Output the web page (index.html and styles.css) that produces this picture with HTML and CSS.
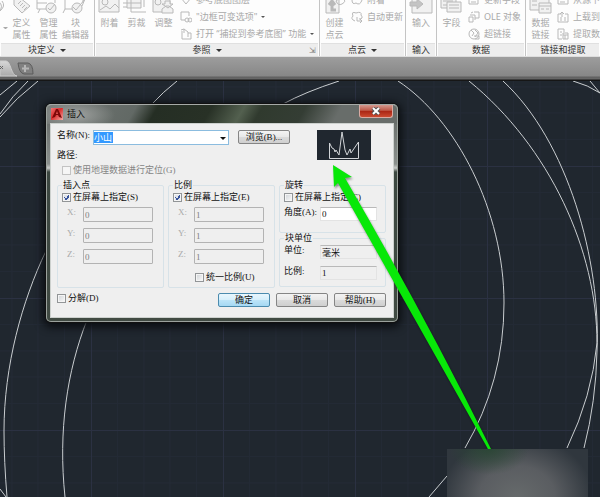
FILE: index.html
```html
<!DOCTYPE html>
<html lang="zh-CN">
<head>
<meta charset="utf-8">
<title>插入</title>
<link rel="stylesheet" href="styles.css">
</head>
<body>
<svg class="defs" aria-hidden="true">
  <defs>
    <linearGradient id="red" x1="0" y1="0" x2="1" y2="1"><stop offset="0" stop-color="#ef7777"/><stop offset=".45" stop-color="#d92c2c"/><stop offset="1" stop-color="#f4aaa6"/></linearGradient>
  </defs>
</svg>
<header class="ribbon">
  <section class="panel">
    <div class="tools">
      <span class="edge"><svg class="big" viewBox="0 0 10 14"><path d="M-4 0Q3 3 1 9L-4 12M2 1Q6 6 0 11"/></svg><i class="caret"></i></span>
      <button class="tool"><svg class="big" viewBox="0 0 26 14"><path class="fill" d="M6 2V-3L11-3 22 6 14 13 6 5Z"/><path d="M10 4L13 1M12 6L15 3M14 8L17 5M16 10L19 7"/></svg>定义<br>属性</button>
      <button class="tool"><svg class="big" viewBox="0 0 26 14"><path d="M2-2V9H11M2 3H12M20-1V3"/><circle class="fill" cx="16" cy="8" r="5"/><path d="M13 8L15 10 20 4M3 13L5 9"/></svg>管理<br>属性</button>
      <button class="tool"><svg class="big" viewBox="0 0 26 14"><path d="M3-2V9H12M3 9L1 13M14-1H21V3"/><circle class="fill" cx="15" cy="8" r="5"/><path d="M11 7L14 10 23-1 20 6"/></svg>块<br>编辑器</button>
    </div>
    <h2>块定义 <i class="caret"></i></h2>
  </section>
  <section class="panel">
    <div class="tools">
      <button class="tool first"><svg class="big" viewBox="0 0 26 14"><path class="fill" d="M3-2H23V12H3Z"/><circle cx="9" cy="2" r="3"/><path d="M4 10L10 6 14 9 19 4 23 8"/></svg>附着</button>
      <button class="tool"><svg class="big" viewBox="0 0 26 14"><path class="fill" d="M4-2H18V8H4Z"/><path d="M0 3H18M8-2V12H23M21-2V7M0 7H4"/></svg>剪裁</button>
      <button class="tool"><svg class="big" viewBox="0 0 26 14"><path class="fill" d="M3-2H20V12H3Z"/><circle cx="8" cy="2" r="3"/><path class="fill" d="M12 13V9L16 6H19L23 9V13ZM15 1H20V4H23L18 8 12 4H15Z"/></svg>调整</button>
      <ul class="list">
        <li><button><svg viewBox="0 0 12 12"><path d="M1 4L6 10 11 4"/></svg>参考底图图层</button></li>
        <li><button><svg viewBox="0 0 12 12"><path d="M5 9H1V1H9V5"/><circle cx="7" cy="9" r="2"/><circle cx="10" cy="9" r="2"/></svg>"边框可变选项"<i class="caret"></i></button></li>
        <li><button><svg viewBox="0 0 12 12"><path d="M2 3V11H11V5H8M4 5V1L8 4V9M1 2L4 1"/></svg>打开 “捕捉到参考底图” 功能<i class="caret"></i></button></li>
      </ul>
    </div>
    <h2>参照 <i class="caret"></i><span class="launcher">⇲</span></h2>
  </section>
  <section class="panel">
    <div class="tools">
      <button class="tool first"><svg class="big" viewBox="0 0 26 14"><path class="fill" d="M5-2H18V13H5Z"/><path class="arrow" d="M15 10H11V3M8 5L11 1 14 5"/><path d="M15 1Q18-3 22-1T21 4Q17 6 15 1"/></svg>创建<br>点云</button>
      <ul class="list">
        <li><button><svg viewBox="0 0 12 12"><path d="M1 6Q1 11 5 9 9 12 11 6"/></svg>附着</button></li>
        <li><button><svg viewBox="0 0 12 12"><path d="M4 10Q-1 8 2 5 0 0 5 2 11 0 10 4 13 8 8 8M6 6V10H11M9 8L11 10 9 12"/></svg>自动更新</button></li>
      </ul>
    </div>
    <h2>点云 <i class="caret"></i></h2>
  </section>
  <section class="panel">
    <div class="tools middle">
      <button class="tool"><svg class="big" viewBox="0 0 26 14"><path class="fill" d="M4-2H24V13H4Z"/><path class="fill dark" d="M2 2H9V-1L15 4 9 9V6H2Z"/></svg>输入</button>
    </div>
    <h2>输入</h2>
  </section>
  <section class="panel">
    <div class="tools">
      <button class="tool first"><svg class="big" viewBox="0 0 26 14"><path class="fill" d="M3-2H18V8H3Z"/><path d="M5 1H15M5 5H15"/><path class="fill" d="M9 2H23V12H9Z"/><path d="M11 5H21M11 8H21"/></svg>字段</button>
      <ul class="list">
        <li><button><svg viewBox="0 0 12 12"><path d="M1 4V10H10V4M3 8H8"/></svg>更新字段</button></li>
        <li><button><svg viewBox="0 0 12 12"><path d="M6 1H11V7H7M2 4H7V9M1 6V11H5V6ZM3 2L5 1"/></svg>OLE 对象</button></li>
        <li><button><svg viewBox="0 0 12 12"><circle cx="6" cy="6" r="5"/><path d="M3 2L6 5 4 8M7 2L10 5 7 9M6 8H11V11H7"/></svg>超链接</button></li>
      </ul>
    </div>
    <h2>数据</h2>
  </section>
  <section class="panel">
    <div class="tools">
      <button class="tool first"><svg class="big" viewBox="0 0 26 14"><path class="fill" d="M3-2H22V10H3Z"/><path d="M5 1H10M5 5H10"/><path class="fill" d="M12 3H24V13H12Z"/><path d="M12 6H24M14 9H17M19 9H22M15-1H19"/></svg>数据<br>链接</button>
      <ul class="list">
        <li><button><svg viewBox="0 0 12 12"><path d="M1 3V10H11V6M3 8H8"/></svg>从源下载</button></li>
        <li><button><svg viewBox="0 0 12 12"><path d="M1 3V11H11V3H8M4 3H1M5 6V1M3 3L5 1 7 3M3 7H5M3 9H5M7 7H9M7 9H9"/></svg>上载到源</button></li>
        <li><button><svg viewBox="0 0 12 12"><path d="M5 11H1V1H7V4M3 4H5M3 7H5M6 5H11V11H6ZM6 7H11M8 7V11"/></svg>提取数据</button></li>
      </ul>
    </div>
    <h2>链接和提取</h2>
  </section>
</header>
<nav class="tabs">
  <svg viewBox="0 0 40 17" aria-hidden="true">
    <defs><linearGradient id="tab" x1="0" y1="0" x2="0" y2="1"><stop offset="0" stop-color="#d8d8d8"/><stop offset="1" stop-color="#aaa"/></linearGradient></defs>
    <path d="M0 1H6C11 1 11 16 17 16H0Z" fill="url(#tab)" stroke="#ccc"/>
    <path d="M0 6L3 9M3 6L0 9" stroke="#666"/>
    <path d="M18 3H28Q33 4 33 14H24Q19 13 18 3Z" fill="#808080" stroke="#5c5c5c"/>
    <path d="M25 5V12M22 8.500H29" stroke="#b5b5b5" stroke-width="2"/>
  </svg>
</nav>
<main class="drawing">
  <svg class="model" viewBox="0 0 600 416" preserveAspectRatio="xMinYMin slice" aria-hidden="true">
    <defs>
      <pattern id="grid" x="91" y="85" width="132" height="132" patternUnits="userSpaceOnUse">
        <path d="M26.500 0V132M53 0V132M79 0V132M105.500 0V132M0 26.500H132M0 53H132M0 79H132M0 105.500H132" stroke="#232a35"/>
        <path d="M.5 0V132M0 .5H132" stroke="#2b3142"/>
      </pattern>
    </defs>
    <rect width="600" height="416" fill="url(#grid)"/>
    <g class="curves">
      <path d="M17 0L0 14M28 0Q12 15 0 33M38 0Q16 17 0 36"/>
      <path d="M177 0Q163 11 152 23M339 0Q305 11 283 23"/>
      <path d="M46 170C22 220 4 285 4 350Q4 380 7 416M0 408L6 416"/>
      <path d="M87 239C67 290 58 350 65 416"/>
      <path d="M398 0C456 38 504 130 504 222Q504 300 465 367M447 395L429 416"/>
      <path d="M469 0C550 66 597 170 597 262Q592 315 567 367"/>
      <path d="M503 0C568 60 601 180 597 270Q596 320 584 367"/>
      <path d="M573 0Q588 4 600 12M590 0L600 12"/>
    </g>
  </svg>

  <form class="dialog">
    <div class="titlebar">
      <svg class="logo" viewBox="0 0 12 12" aria-hidden="true"><path d="M0 0H12V12H0Z" fill="url(#red)"/><path d="M1 10L5 1H7L11 10 8 9 7 7H5L4 9Z" fill="#7d0808"/><path d="M6 3L7 6H5Z" fill="#e35454"/></svg>
      <h1>插入</h1>
      <button type="button" class="close" aria-label="关闭"><svg viewBox="0 0 10 8"><path d="M2 1L8 7M8 1L2 7" stroke="#555" stroke-width="4"/><path d="M2 1L8 7M8 1L2 7" stroke="#fff" stroke-width="2"/></svg></button>
    </div>
    <div class="client">
      <div class="top">
        <div class="source">
          <div class="namerow">
            <label for="name">名称(N):</label>
            <span class="combo"><input id="name" value="小山"><button type="button" aria-label="展开"><i class="caret"></i></button></span>
            <button type="button" class="btn">浏览(B)...</button>
          </div>
          <p>路径:</p>
          <label class="check geo"><input type="checkbox" disabled>使用地理数据进行定位(G)</label>
        </div>
        <svg class="preview" viewBox="0 0 54 30" aria-hidden="true"><path d="M12.500 28.500V13L15 18 17 19 18 22 19 20 22 25 25 2 28 20 30 25 33 19 34 23 41.500 12V28.500Z"/></svg>
      </div>
      <div class="groups">
        <fieldset>
          <legend>插入点</legend>
          <label class="check"><input type="checkbox" checked>在屏幕上指定(S)</label>
          <div class="coords">
            <label for="px">X:</label><input id="px" value="0" disabled>
            <label for="py">Y:</label><input id="py" value="0" disabled>
            <label for="pz">Z:</label><input id="pz" value="0" disabled>
          </div>
        </fieldset>
        <fieldset>
          <legend>比例</legend>
          <label class="check"><input type="checkbox" checked>在屏幕上指定(E)</label>
          <div class="coords">
            <label for="sx">X:</label><input id="sx" value="1" disabled>
            <label for="sy">Y:</label><input id="sy" value="1" disabled>
            <label for="sz">Z:</label><input id="sz" value="1" disabled>
          </div>
          <label class="check uniform"><input type="checkbox">统一比例(U)</label>
        </fieldset>
        <div class="stack">
          <fieldset>
            <legend>旋转</legend>
            <label class="check"><input type="checkbox">在屏幕上指定(C)</label>
            <div class="values angle"><label for="angle">角度(A):</label><input id="angle" value="0"></div>
          </fieldset>
          <fieldset>
            <legend>块单位</legend>
            <div class="values">
              <label for="unit">单位:</label><input id="unit" value="毫米" readonly>
              <label for="factor">比例:</label><input id="factor" value="1" readonly>
            </div>
          </fieldset>
        </div>
      </div>
      <div class="actions">
        <label class="check"><input type="checkbox">分解(D)</label>
        <button type="button" class="btn primary">确定</button>
        <button type="button" class="btn">取消</button>
        <button type="button" class="btn">帮助(H)</button>
      </div>
    </div>
  </form>

  <svg class="pointer" viewBox="0 0 160 286" aria-hidden="true"><path d="M1 1L20 13 13 14Q91 148 159 285L156 285 6 19 2 23Z"/></svg>
  <div class="smudge"></div>
</main>
</body>
</html>
```

FILE: styles.css
```css
* { box-sizing: border-box; }
html, body { height: 100%; }
body {
  margin: 0;
  display: flex;
  flex-direction: column;
  overflow: hidden;
  font: 9px/10px "Liberation Serif", "Noto Sans CJK SC", serif;
  color: #111;
}
button, input { font: inherit; color: inherit; margin: 0; padding: 0; }
h1, h2, p, ul { margin: 0; padding: 0; font: inherit; list-style: none; }
svg { fill: none; flex: none; }
.defs { width: 0; height: 0; position: absolute; }
.caret {
  display: inline-block;
  border: 3px solid transparent;
  border-top-color: currentColor;
  border-bottom: 0;
  vertical-align: middle;
}

/* ribbon */
.ribbon {
  flex: none;
  display: grid;
  grid-template-columns: 95px 225px 86px 31px 89px 1fr;
  font-family: "Noto Sans", "Noto Sans CJK SC", sans-serif;
  background: #fdfdfd;
  border-bottom: 1px solid #ddd;
}
.panel { min-width: 0; border-right: 1px solid #c4c4c4; overflow: hidden; }
.panel:last-child { border-right: 0; }
.tools {
  display: flex;
  height: 43px;
  overflow: hidden;
  color: #a9a9a9;
  align-items: flex-start;
}
.tools.middle { justify-content: center; }
.panel h2 {
  display: flex;
  justify-content: center;
  align-items: center;
  gap: 5px;
  height: 13px;
  margin: 0 1px;
  background: #ededed;
  border-top: 1px solid #e0e0e0;
  color: #333;
  position: relative;
}
.launcher { position: absolute; right: 2px; color: #777; font-size: 8px; }
.edge { width: 8px; flex: none; }
.edge .big { width: 10px; }
.edge .caret { border-width: 2px; border-bottom: 0; margin: 13px 0 0 3px; display: block; }
.tool {
  flex: none;
  width: 27px;
  border: 0;
  background: none;
  line-height: 12px;
  text-align: center;
  white-space: nowrap;
}
.tool.first { margin-left: 1px; }
.big { display: block; width: 26px; height: 14px; margin-bottom: 3px; }
.tools svg { stroke: #b9b9b9; }
.tools .fill { fill: #f1f1f1; }
.tools .dark { fill: #c4c4c4; }
.tools .arrow { stroke-width: 3; }
.list { margin: -9px 0 0 3px; }
.list button {
  display: flex;
  align-items: center;
  gap: 4px;
  height: 17px;
  border: 0;
  background: none;
  white-space: nowrap;
}
.list svg { width: 12px; height: 12px; }
.list .caret { border-width: 2px; border-bottom: 0; color: #555; }

/* document tabs */
.tabs {
  flex: none;
  height: 24px;
  padding-top: 3px;
  background: linear-gradient(#9d9d9d, #878787 19px, #606060 20px, #686868 22px, #161616 23px);
}
.tabs svg { display: block; width: 40px; height: 17px; }

/* drawing area */
.drawing {
  flex: 1;
  position: relative;
  overflow: hidden;
  background: #20272f;
}
.model { position: absolute; inset: 0; width: 100%; height: 100%; }
.curves { stroke: #c9cdd0; }
.pointer {
  position: absolute;
  left: 332px;
  top: 83px;
  width: 160px;
  height: 286px;
  fill: #08e808;
  filter: drop-shadow(1px 2px 1px rgba(0, 0, 0, .4));
}
.smudge {
  position: absolute;
  left: 447px;
  top: 368px;
  width: 141px;
  height: 60px;
  background:
    radial-gradient(ellipse 40px 26px at 42px 0, rgba(40, 72, 50, .8), transparent 100%),
    radial-gradient(ellipse 76px 62px at 70px 48px, #666a6b 0, #5a5d61 50%, #30373e 100%);
}

/* insert dialog */
.dialog {
  position: absolute;
  left: 46px;
  top: 23px;
  width: 352px;
  padding: 0 5px 5px;
  border-radius: 5px;
  background: linear-gradient(#5d625f, #8b908d 60px, #c8cac8 64px, #3c4740 68px, #414b43);
  box-shadow: inset 0 0 0 1px #9ba29d, 0 0 0 1px #111, 0 2px 9px 3px #0a0d10;
}
.titlebar {
  display: flex;
  align-items: center;
  gap: 4px;
  height: 20px;
  margin: 0 -4px;
  padding: 0 0 2px 4px;
  border-radius: 5px 5px 0 0;
  background:
    radial-gradient(ellipse 40px 16px at 28px 10px, #a0a3a1, transparent),
    linear-gradient(120deg, #727774 0, #626965 25%, #252e24 31%, #283126 46%, #53604f 55%, #303a2e 60%, #343d34 72%, #686d6a 82%);
  border-top: 1px solid #a6aaa7;
}
.logo { width: 12px; height: 12px; }
.titlebar h1 { color: #111; }
.close {
  display: grid;
  place-items: center;
  width: 34px;
  height: 13px;
  margin: 0 4px 0 auto;
  align-self: flex-start;
  border: 1px solid #d9aaa2;
  border-top: 0;
  border-radius: 0 0 3px 3px;
  background: linear-gradient(#d39a8f, #bf5a49 45%, #a92413 50%, #cb4a30);
}
.close svg { width: 10px; height: 8px; }
.client {
  padding: 6px 7px 10px 6px;
  background: #efefef;
  box-shadow: 0 0 0 1px #cdd1ce;
}
.top { display: flex; justify-content: space-between; }
.source { display: flex; flex-direction: column; gap: 5px; padding-bottom: 5px; }
.namerow { display: flex; height: 15px; }
.namerow > label { width: 36px; }
.combo {
  display: flex;
  width: 136px;
  margin-right: 9px;
  border: 1px solid #8bbcdf;
  background: #fff;
}
.combo input {
  flex: 1;
  min-width: 0;
  border: 0;
  outline: 0;
  color: #fff;
  background: linear-gradient(#3399ff, #3399ff) 0 50% / 19px 11px no-repeat;
}
.combo button { width: 11px; border: 0; background: none; line-height: 8px; }
.preview {
  width: 54px;
  height: 30px;
  margin-right: 15px;
  background: #20272f;
  stroke: #d2d5d8;
}
.check { display: flex; align-items: center; gap: 2px; height: 10px; white-space: nowrap; }
.check input {
  appearance: none;
  flex: none;
  width: 9px;
  height: 9px;
  border: 1px solid #929597;
  background: linear-gradient(135deg, #cfd3d7, #fafafa);
  box-shadow: inset 0 0 0 1px #f5f5f5;
}
.check input:checked {
  background:
    linear-gradient(45deg, transparent 38%, #38549c 39%, #38549c 55%, transparent 56%) 1px 3px / 4px 4px no-repeat,
    linear-gradient(125deg, transparent 40%, #38549c 41%, #38549c 62%, transparent 63%) 2px 0 / 5px 7px no-repeat,
    #dfe3ea;
}
.check input:disabled { border-color: #c3c3c3; background: #f6f6f6; }
.geo { margin-left: 5px; color: #858585; }
.groups { display: grid; grid-template-columns: repeat(3, 1fr); gap: 4px; height: 107px; }
fieldset {
  min-width: 0;
  margin: 0;
  padding: 2px 4px 5px;
  border: 1px solid #d7e2e8;
  border-radius: 2px;
}
legend { padding: 0 1px; line-height: 10px; }
.stack { display: grid; grid-template-rows: 53px 54px; }
.coords {
  display: grid;
  grid-template-columns: 16px 70px;
  gap: 6px 0;
  margin: 5px 0 0 5px;
  color: #808080;
}
.coords label { color: #aaa; }
.coords input {
  width: 100%;
  height: 15px;
  padding: 0 1px;
  border: 1px solid #b3b3b3;
  border-radius: 1px;
  background: #efefef;
}
.uniform { margin: 8px 0 0 22px; }
.values { display: grid; grid-template-columns: 36px 57px; gap: 7px 0; }
.values label { white-space: nowrap; }
.values input {
  width: 100%;
  height: 14px;
  padding: 0 1px;
  border: 1px solid #e3e3e3;
  border-top-color: #b9b9b9;
  background: #efefef;
}
.values.angle { margin-top: 5px; }
.values.angle input { background: #fff; }
.actions { display: flex; gap: 6px; height: 14px; margin-top: 6px; }
.actions .check { margin-right: auto; }
.btn {
  width: 52px;
  height: 14px;
  border: 1px solid #858585;
  border-radius: 2px;
  background: linear-gradient(#f3f3f3, #e8e8e8 48%, #dadada 52%, #cfcfcf);
  line-height: 11px;
  white-space: nowrap;
}
.primary { border-color: #4b8bae; background: linear-gradient(#e9f6fd, #d6effb 48%, #bce4f8 52%, #a5d8f3); }
```
